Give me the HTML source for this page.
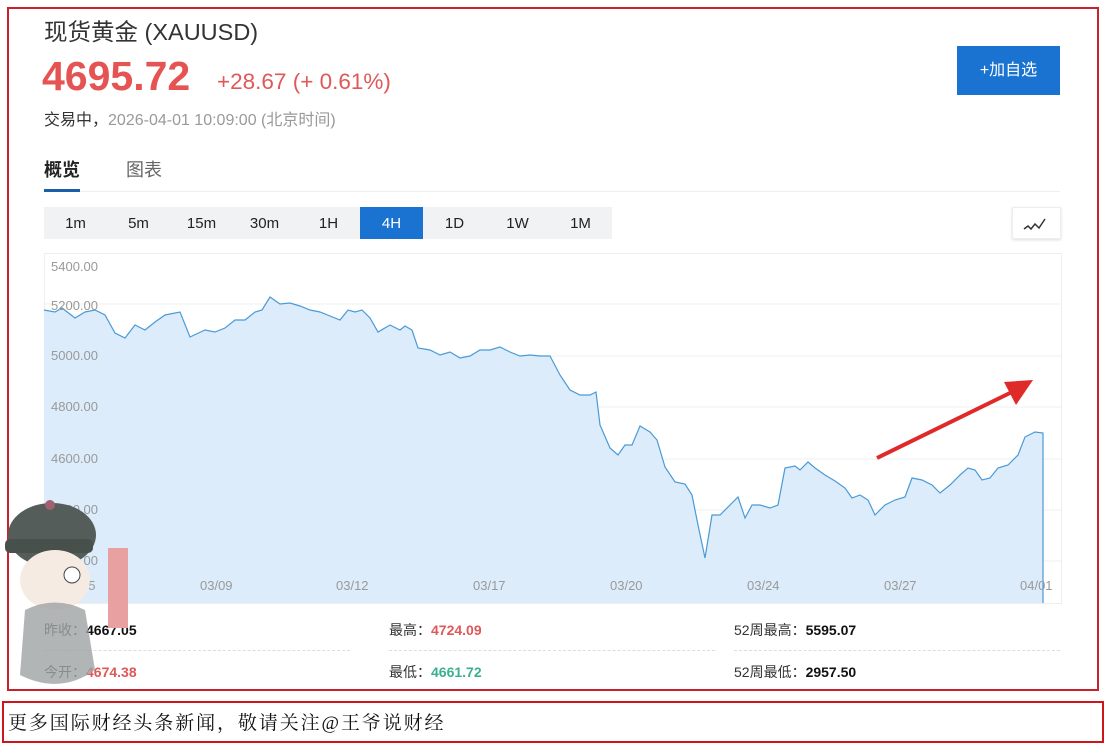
<!DOCTYPE html>
<html><head><meta charset="utf-8"><style>
body{margin:0;width:1105px;height:744px;background:#fff;position:relative;overflow:hidden;font-family:"Liberation Sans","Noto Sans CJK SC",sans-serif;}
.a{position:absolute;white-space:nowrap}
.box1{position:absolute;left:7px;top:7px;width:1088px;height:680px;border:2px solid #c8232c}
.box2{position:absolute;left:2px;top:701px;width:1098px;height:38px;border:2px solid #d0141c}
.tabs{position:absolute;left:44px;top:207px;width:568px;height:32px;background:#f0f2f4}
.tabs span{position:absolute;top:0;width:63px;height:32px;line-height:34px;text-align:center;font-size:15px;color:#222}
.lbl{font-size:14px;color:#333}
.v{font-weight:bold;font-size:14px}
.ax{font-size:13px;color:#999}
</style></head><body>
<div class="box1"></div>
<div class="box2"></div>
<div class="a" style="left:44px;top:13px;font-size:23.5px;color:#333">现货黄金 (XAUUSD)</div>
<div class="a" style="left:42px;top:53px;font-size:41px;font-weight:bold;color:#e55353">4695.72</div>
<div class="a" style="left:217px;top:69px;font-size:22.5px;color:#e05858">+28.67 (+ 0.61%)</div>
<div class="a" style="left:44px;top:106px;font-size:16px;color:#333">交易中，<span style="color:#999">2026-04-01 10:09:00 (北京时间)</span></div>
<div class="a" style="left:957px;top:46px;width:103px;height:49px;background:#1a73d1;color:#fff;font-size:16px;line-height:49px;text-align:center">+加自选</div>
<div class="a" style="left:44px;top:156px;font-size:18px;font-weight:bold;color:#222">概览</div>
<div class="a" style="left:126px;top:156px;font-size:18px;color:#666">图表</div>
<div class="a" style="left:44px;top:191px;width:1016px;height:1px;background:#eee"></div>
<div class="a" style="left:44px;top:189px;width:36px;height:3px;background:#1a5fa8"></div>
<div class="tabs">
<span style="left:0">1m</span><span style="left:63px">5m</span><span style="left:126px">15m</span><span style="left:189px">30m</span><span style="left:253px">1H</span><span style="left:316px;background:#1a73d1;color:#fff">4H</span><span style="left:379px">1D</span><span style="left:442px">1W</span><span style="left:505px">1M</span>
</div>
<div class="a" style="left:1012px;top:207px;width:47px;height:30px;border:1px solid #eee;box-shadow:0 1px 3px #ddd;background:#fff">
<svg width="47" height="30"><path d="M11 21 L15 18 L18 21 L22 16 L26 20 L32 11" fill="none" stroke="#333" stroke-width="1.5"/></svg></div>
<svg class="a" style="left:0;top:0" width="1105" height="744">
<rect x="44.5" y="253.5" width="1017" height="350" fill="#fff" stroke="#eee"/>
<g stroke="#eef0f2"><line x1="44" y1="304" x2="1061" y2="304"/><line x1="44" y1="356" x2="1061" y2="356"/><line x1="44" y1="407" x2="1061" y2="407"/><line x1="44" y1="459" x2="1061" y2="459"/><line x1="44" y1="510" x2="1061" y2="510"/><line x1="44" y1="561" x2="1061" y2="561"/></g>
<polygon fill="#dcecfa" points="44,310 55,312 62,308 75,318 85,312 95,310 105,315 115,333 125,338 135,325 145,330 155,322 165,315 180,312 190,337 205,330 215,332 225,328 235,320 245,320 255,312 262,310 270,297 280,304 290,303 300,306 310,310 320,312 330,316 340,320 348,310 355,312 362,310 370,318 378,332 390,325 400,330 405,326 412,330 418,348 430,350 440,355 450,352 460,358 470,356 480,350 490,350 500,347 510,352 520,356 530,355 540,356 550,356 560,375 570,390 580,395 590,395 596,392 600,425 610,448 618,455 625,445 632,445 640,426 650,432 657,440 665,467 675,482 685,484 692,495 698,525 705,558 712,515 720,515 730,505 738,497 745,518 752,505 760,505 770,508 778,505 785,468 795,466 800,470 808,462 815,468 825,475 835,481 845,488 852,498 860,495 868,500 875,515 885,505 895,500 905,497 912,478 922,480 932,485 940,493 950,485 960,475 968,468 975,470 982,480 990,478 998,468 1008,465 1018,455 1025,437 1035,432 1043,433 1043,603 44,603"/>
<polyline fill="none" stroke="#4a9ad6" stroke-width="1.2" points="44,310 55,312 62,308 75,318 85,312 95,310 105,315 115,333 125,338 135,325 145,330 155,322 165,315 180,312 190,337 205,330 215,332 225,328 235,320 245,320 255,312 262,310 270,297 280,304 290,303 300,306 310,310 320,312 330,316 340,320 348,310 355,312 362,310 370,318 378,332 390,325 400,330 405,326 412,330 418,348 430,350 440,355 450,352 460,358 470,356 480,350 490,350 500,347 510,352 520,356 530,355 540,356 550,356 560,375 570,390 580,395 590,395 596,392 600,425 610,448 618,455 625,445 632,445 640,426 650,432 657,440 665,467 675,482 685,484 692,495 698,525 705,558 712,515 720,515 730,505 738,497 745,518 752,505 760,505 770,508 778,505 785,468 795,466 800,470 808,462 815,468 825,475 835,481 845,488 852,498 860,495 868,500 875,515 885,505 895,500 905,497 912,478 922,480 932,485 940,493 950,485 960,475 968,468 975,470 982,480 990,478 998,468 1008,465 1018,455 1025,437 1035,432 1043,433 1043,603"/>
<line x1="877" y1="458" x2="1012" y2="392" stroke="#e02a2a" stroke-width="4"/>
<polygon points="1033,380 1004,382 1016,405" fill="#e02a2a"/>
</svg>
<div class="a ax" style="left:51px;top:259px">5400.00</div>
<div class="a ax" style="left:51px;top:298px">5200.00</div>
<div class="a ax" style="left:51px;top:348px">5000.00</div>
<div class="a ax" style="left:51px;top:399px">4800.00</div>
<div class="a ax" style="left:51px;top:451px">4600.00</div>
<div class="a ax" style="left:51px;top:502px">4400.00</div>
<div class="a ax" style="left:51px;top:553px">4200.00</div>
<div class="a ax" style="left:63px;top:578px">03/05</div>
<div class="a ax" style="left:200px;top:578px">03/09</div>
<div class="a ax" style="left:336px;top:578px">03/12</div>
<div class="a ax" style="left:473px;top:578px">03/17</div>
<div class="a ax" style="left:610px;top:578px">03/20</div>
<div class="a ax" style="left:747px;top:578px">03/24</div>
<div class="a ax" style="left:884px;top:578px">03/27</div>
<div class="a ax" style="left:1020px;top:578px">04/01</div>
<div class="a" style="left:44px;top:650px;width:306px;border-top:1px dashed #ddd"></div>
<div class="a" style="left:389px;top:650px;width:326px;border-top:1px dashed #ddd"></div>
<div class="a" style="left:734px;top:650px;width:326px;border-top:1px dashed #ddd"></div>
<div class="a lbl" style="left:44px;top:620px">昨收：<span class="v" style="color:#111">4667.05</span></div>
<div class="a lbl" style="left:44px;top:662px">今开：<span class="v" style="color:#e05858">4674.38</span></div>
<div class="a lbl" style="left:389px;top:620px">最高：<span class="v" style="color:#e05858">4724.09</span></div>
<div class="a lbl" style="left:389px;top:662px">最低：<span class="v" style="color:#3bb08f">4661.72</span></div>
<div class="a lbl" style="left:734px;top:620px">52周最高：<span class="v" style="color:#111">5595.07</span></div>
<div class="a lbl" style="left:734px;top:662px">52周最低：<span class="v" style="color:#111">2957.50</span></div>
<svg class="a" style="left:0;top:495px" width="135" height="200">
<ellipse cx="52" cy="40" rx="44" ry="32" fill="#555d5a"/>
<rect x="5" y="44" width="88" height="14" rx="5" fill="#48504c"/>
<circle cx="50" cy="10" r="5" fill="#a06070"/>
<ellipse cx="55" cy="85" rx="35" ry="30" fill="#f5ebe3"/>
<circle cx="72" cy="80" r="8" fill="#fff" stroke="#444"/>
<path d="M25 115 Q55 100 85 115 L95 175 Q60 200 20 180 Z" fill="#9fa3a3" opacity="0.8"/>
<rect x="108" y="53" width="20" height="80" fill="#e8a0a0"/>
</svg>
<div class="a" style="left:8px;top:708px;font-size:19px;color:#111;font-family:'Liberation Serif','Noto Serif CJK SC',serif;letter-spacing:1.9px">更多国际财经头条新闻，敬请关注@王爷说财经</div>
</body></html>
